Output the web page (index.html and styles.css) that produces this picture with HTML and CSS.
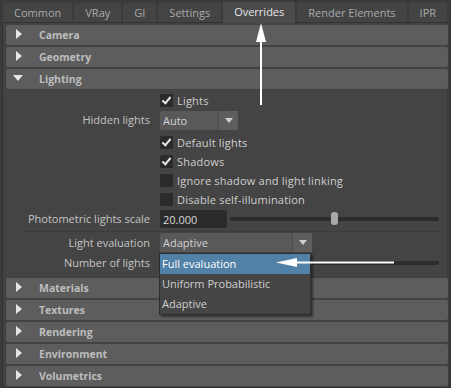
FILE: index.html
```html
<!DOCTYPE html>
<html>
<head>
<meta charset="utf-8">
<link rel="stylesheet" href="styles.css">
</head>
<body>
<div class="app">
  <div class="tabs">
    <div class="tab">Common</div>
    <div class="tab">VRay</div>
    <div class="tab">GI</div>
    <div class="tab">Settings</div>
    <div class="tab active">Overrides</div>
    <div class="tab">Render Elements</div>
    <div class="tab">IPR</div>
  </div>
  <div class="panel">
    <div class="sec"><span class="ico"><span class="tri-r"></span></span>Camera</div>
    <div class="sec"><span class="ico"><span class="tri-r"></span></span>Geometry</div>
    <div class="sec"><span class="ico"><span class="tri-d"></span></span>Lighting</div>
    <div class="body">
      <div class="row h19"><div class="lbl"></div><div class="ctl"><span class="cb on"></span><span class="cbl">Lights</span></div></div>
      <div class="row h20"><div class="lbl">Hidden lights</div><div class="ctl"><div class="dd dd-s"><span class="dd-val">Auto</span><span class="dd-btn"><span class="dd-arr"></span></span></div></div></div>
      <div class="row h19 mt3"><div class="lbl"></div><div class="ctl"><span class="cb on"></span><span class="cbl">Default lights</span></div></div>
      <div class="row h19"><div class="lbl"></div><div class="ctl"><span class="cb on"></span><span class="cbl">Shadows</span></div></div>
      <div class="row h19"><div class="lbl"></div><div class="ctl"><span class="cb"></span><span class="cbl">Ignore shadow and light linking</span></div></div>
      <div class="row h19"><div class="lbl"></div><div class="ctl"><span class="cb"></span><span class="cbl">Disable self-illumination</span></div></div>
      <div class="row h20"><div class="lbl">Photometric lights scale</div><div class="ctl"><span class="field">20.000</span><div class="slider"><span class="handle"></span></div></div></div>
      <div class="sep"></div>
      <div class="row h19"><div class="lbl">Light evaluation</div><div class="ctl"><div class="dd dd-l"><span class="dd-val">Adaptive</span><span class="dd-btn"><span class="dd-arr"></span></span>
        <div class="popup">
          <div class="opt sel">Full evaluation</div>
          <div class="opt">Uniform Probabilistic</div>
          <div class="opt">Adaptive</div>
        </div></div></div></div>
      <div class="row h22"><div class="lbl">Number of lights</div><div class="ctl"><span class="field"></span><div class="slider"></div></div></div>
    </div>
    <div class="sec"><span class="ico"><span class="tri-r"></span></span>Materials</div>
    <div class="sec"><span class="ico"><span class="tri-r"></span></span>Textures</div>
    <div class="sec"><span class="ico"><span class="tri-r"></span></span>Rendering</div>
    <div class="sec"><span class="ico"><span class="tri-r"></span></span>Environment</div>
    <div class="sec"><span class="ico"><span class="tri-r"></span></span>Volumetrics</div>
  </div>
  <svg class="annot" width="451" height="388" viewBox="0 0 451 388">
    <rect x="260" y="38" width="2" height="67" fill="#ffffff"/>
    <polygon points="261,23 256,42 266,42" fill="#ffffff"/>
    <rect x="292" y="261.5" width="102" height="2" fill="#ffffff"/>
    <polygon points="276,262.5 297,258 297,267" fill="#ffffff"/>
  </svg>
</div>
</body>
</html>
```

FILE: styles.css
```css
* { box-sizing: border-box; }
html, body { margin: 0; padding: 0; }
body {
  width: 451px;
  height: 388px;
  overflow: hidden;
  background: #3b3b3b;
  font-family: "Open Sans", "Noto Sans", sans-serif;
  font-size: 11px;
  color: #c8c8c8;
}
.app { position: relative; width: 451px; height: 388px; }

.tabs {
  display: flex;
  gap: 2px;
  height: 22px;
  padding: 3px 0 0 3px;
  align-items: flex-end;
}
.tab {
  flex: none;
  white-space: nowrap;
  height: 19px;
  padding: 0 11px;
  background: #444444;
  color: #a9a9a9;
  font-size: 11px;
  line-height: 19px;
  border-radius: 2px 2px 0 0;
}
.tab.active {
  height: 21px;
  margin-bottom: -1px;
  background: #4b4b4b;
  color: #e6e6e6;
  line-height: 20px;
}

.panel {
  margin: 0 1px 0 2px;
  height: 366px;
  border: 1px solid #333333;
  background: #424242;
  padding: 2px 1px 0 3px;
  display: flex;
  flex-direction: column;
  gap: 2px;
  overflow: hidden;
}
.sec {
  flex: none;
  height: 20px;
  background: #5d5d5d;
  border-radius: 2px;
  display: flex;
  align-items: center;
  font-weight: bold;
  color: #bdbdbd;
  font-size: 10.5px;
  line-height: 20px;
}
.ico {
  width: 33px;
  height: 20px;
  display: flex;
  align-items: center;
  flex: none;
}
.tri-r {
  margin-left: 10px;
  margin-top: -3px;
  width: 0; height: 0;
  border-left: 6px solid #e6e6e6;
  border-top: 5px solid transparent;
  border-bottom: 5px solid transparent;
}
.tri-d {
  margin-left: 7px;
  margin-top: -2px;
  width: 0; height: 0;
  border-top: 6px solid #e6e6e6;
  border-left: 5.5px solid transparent;
  border-right: 5.5px solid transparent;
}

.body {
  flex: none;
  margin-top: -1px;
  padding: 0 0 2px 0;
  background: #444444;
  border-right: 1px solid #3a3a3a;
}
.row {
  display: grid;
  grid-template-columns: 144px 1fr;
  column-gap: 10px;
  align-items: center;
  line-height: 14px;
}
.h19 { height: 19px; }
.h20 { height: 20px; }
.h22 { height: 22px; }
.mt3 { margin-top: 3px; }
.body > .row:first-child { margin-top: 1px; }
.lbl { text-align: right; color: #c4c4c4; white-space: nowrap; }
.ctl { display: flex; align-items: center; gap: 4px; color: #cfcfcf; white-space: nowrap; }
.cbl { letter-spacing: 0.2px; }

.cb {
  width: 13px; height: 13px;
  background: #2b2b2b;
  border-radius: 1px;
  position: relative;
  flex: none;
}
.cb.on::after {
  content: "";
  position: absolute;
  left: 4px; top: 1px;
  width: 3px; height: 7px;
  border-right: 2px solid #e8e8e8;
  border-bottom: 2px solid #e8e8e8;
  transform: rotate(40deg);
}

.dd {
  position: relative;
  height: 19px;
  display: flex;
  background: #595959;
  border-radius: 2px;
}
.dd-s { width: 78px; }
.dd-l { width: 152px; }
.dd-val { flex: 1; padding-left: 3px; line-height: 20px; color: #d2d2d2; }
.dd-btn {
  width: 20px;
  border-left: 1px solid #4a4a4a;
  background: #5e5e5e;
  display: flex;
  align-items: center;
  justify-content: center;
}
.dd-arr {
  width: 0; height: 0;
  border-top: 5px solid #d0d0d0;
  border-left: 4.5px solid transparent;
  border-right: 4.5px solid transparent;
}

.field {
  width: 67px;
  height: 18px;
  background: #2b2b2b;
  border-radius: 2px;
  padding-left: 3px;
  line-height: 19px;
  color: #d6d6d6;
  flex: none;
}
.slider {
  position: relative;
  margin-left: -1px;
  width: 209px;
  height: 4px;
  background: #2c2c2c;
  border-radius: 2px;
}
.handle {
  position: absolute;
  left: 101px;
  top: -5px;
  width: 7px;
  height: 13px;
  border-radius: 3px;
  background: #a8a8a8;
}
.sep {
  margin: 2px 3px 1px 14px;
  height: 1px;
  background: #3d3d3d;
}

.popup {
  position: absolute;
  left: -1px;
  top: 20px;
  width: 152px;
  height: 62px;
  background: #454545;
  border: 1px solid #2e2e2e;
  box-shadow: 2px 2px 2px rgba(0,0,0,0.45);
  z-index: 5;
}
.opt {
  height: 20px;
  line-height: 20px;
  padding-left: 2px;
  color: #cfcfcf;
}
.opt.sel { background: #5181a6; color: #ffffff; }

.annot {
  position: absolute;
  left: 0; top: 0;
  pointer-events: none;
  z-index: 10;
}
```
